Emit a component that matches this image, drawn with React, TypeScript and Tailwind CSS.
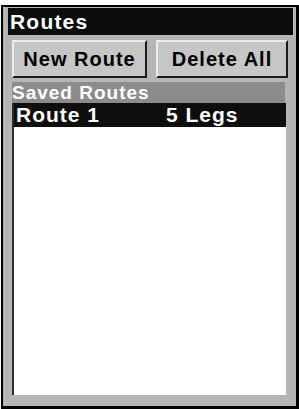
import React from 'react';

const font = { fontFamily: '"Liberation Sans", Arial, sans-serif' };

const App: React.FC = () => {
  const routes = [{ name: 'Route 1', legs: '5 Legs' }];

  return (
    <div className="w-[299px] h-[409px] bg-white pt-[5px] pl-[1px]" style={font}>
      {/* Outer frame */}
      <div className="w-[298px] h-[404px] border-l-2 border-t-2 border-r-[3px] border-b-[3px] border-black bg-[#b5b5b5] flex flex-col pt-px pl-[5px] pr-[3px] pb-[11px]">
        {/* Title bar */}
        <div className="h-[27px] bg-[#0c0c0c] text-white font-bold text-[21px] leading-[28px] tracking-[1.2px] pl-[2px]">
          Routes
        </div>

        <div className="flex flex-col flex-1 pl-[4px] pr-[5px]">
          {/* Buttons */}
          <div className="flex gap-[9px] mt-[5px]">
            <button className="w-[135px] h-[38px] bg-[#c6c6c6] border-t-2 border-l-2 border-[#ececec] border-b-2 border-r-2 border-b-[#1a1a1a] border-r-[#1a1a1a] text-black font-bold text-[20px] tracking-[1px] leading-none">
              New Route
            </button>
            <button className="flex-1 h-[38px] bg-[#c6c6c6] border-t-2 border-l-2 border-[#ececec] border-b-2 border-r-2 border-b-[#1a1a1a] border-r-[#1a1a1a] text-black font-bold text-[20px] tracking-[1px] leading-none">
              Delete All
            </button>
          </div>

          {/* Saved routes header */}
          <div className="mt-[4px] mr-[3px] h-[21px] bg-[#8c8c8c] text-white font-bold text-[19px] leading-[21px] tracking-[1px]">
            Saved Routes
          </div>

          {/* List */}
          <div className="flex-1 mr-[2px] bg-white border-l-2 border-[#2a2a2a]">
            {routes.map((r, i) => (
              <div
                key={i}
                className="h-[24px] bg-[#0e0e0e] text-white font-bold text-[21px] leading-[24px] tracking-[1px] flex"
              >
                <span className="w-[152px] pl-[2px]">{r.name}</span>
                <span>{r.legs}</span>
              </div>
            ))}
          </div>
        </div>
      </div>
    </div>
  );
};

export default App;
